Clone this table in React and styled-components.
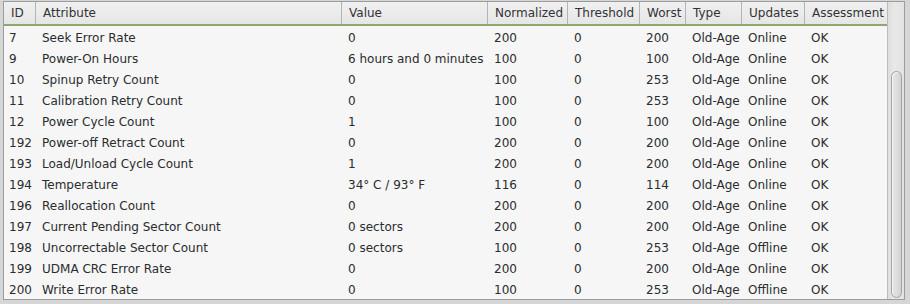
import React from "react";
import styled, { createGlobalStyle } from "styled-components";

const GlobalStyle = createGlobalStyle`
  html, body {
    margin: 0;
    padding: 0;
    background: #d6d6d6;
  }
  body {
    font-family: "DejaVu Sans", "Liberation Sans", sans-serif;
    font-size: 12px;
  }
`;

const COLUMNS = [
  { key: "id", title: "ID", width: 32 },
  { key: "name", title: "Attribute", width: 306 },
  { key: "value", title: "Value", width: 146 },
  { key: "norm", title: "Normalized", width: 80 },
  { key: "thr", title: "Threshold", width: 72 },
  { key: "worst", title: "Worst", width: 46 },
  { key: "type", title: "Type", width: 56 },
  { key: "upd", title: "Updates", width: 63 },
  { key: "ok", title: "Assessment", width: 82 },
];

const GRID = COLUMNS.map((c) => `${c.width}px`).join(" ");

const ROWS = [
  ["7", "Seek Error Rate", "0", "200", "0", "200", "Old-Age", "Online", "OK"],
  ["9", "Power-On Hours", "6 hours and 0 minutes", "100", "0", "100", "Old-Age", "Online", "OK"],
  ["10", "Spinup Retry Count", "0", "100", "0", "253", "Old-Age", "Online", "OK"],
  ["11", "Calibration Retry Count", "0", "100", "0", "253", "Old-Age", "Online", "OK"],
  ["12", "Power Cycle Count", "1", "100", "0", "100", "Old-Age", "Online", "OK"],
  ["192", "Power-off Retract Count", "0", "200", "0", "200", "Old-Age", "Online", "OK"],
  ["193", "Load/Unload Cycle Count", "1", "200", "0", "200", "Old-Age", "Online", "OK"],
  ["194", "Temperature", "34° C / 93° F", "116", "0", "114", "Old-Age", "Online", "OK"],
  ["196", "Reallocation Count", "0", "200", "0", "200", "Old-Age", "Online", "OK"],
  ["197", "Current Pending Sector Count", "0 sectors", "200", "0", "200", "Old-Age", "Online", "OK"],
  ["198", "Uncorrectable Sector Count", "0 sectors", "100", "0", "253", "Old-Age", "Offline", "OK"],
  ["199", "UDMA CRC Error Rate", "0", "200", "0", "200", "Old-Age", "Online", "OK"],
  ["200", "Write Error Rate", "0", "100", "0", "253", "Old-Age", "Offline", "OK"],
];

const Frame = styled.div`
  margin: 1px 0 0 3px;
  width: 902px;
  height: 299px;
  box-sizing: border-box;
  border: 1px solid #9c9c9c;
  background: #f6f6f6;
  display: flex;
  overflow: hidden;
`;

const TableArea = styled.div`
  width: 883px;
  display: flex;
  flex-direction: column;
`;

const HeaderRow = styled.div`
  display: grid;
  grid-template-columns: ${GRID};
  height: 22px;
  background: linear-gradient(#f0f0f0, #e6e6e6);
  border-bottom: 2px solid #8aa96f;
`;

const HeaderCell = styled.div`
  display: flex;
  align-items: center;
  padding-left: 7px;
  border-right: ${(p) => (p.$last ? "none" : "1px solid #b4b4b4")};
  color: #303335;
  white-space: nowrap;
  overflow: hidden;
`;

const Row = styled.div`
  display: grid;
  grid-template-columns: ${GRID};
  height: 21px;
`;

const Cell = styled.div`
  display: flex;
  align-items: center;
  padding: 2px 0 0 ${(p) => (p.$first ? 5 : 6)}px;
  color: #2a2c2e;
  white-space: nowrap;
  overflow: hidden;
`;

const ScrollTrack = styled.div`
  width: 17px;
  box-sizing: border-box;
  border-left: 1px solid #bcbcbc;
  background: linear-gradient(90deg, #dedede, #e8e8e8 40%, #e2e2e2);
  display: flex;
  flex-direction: column;
  padding: 0 2px 1px 3px;
`;

const Thumb = styled.div`
  margin-top: auto;
  height: 227px;
  box-sizing: border-box;
  border: 1px solid #a2a2a2;
  border-radius: 6px;
  background: linear-gradient(90deg, #e6e6e6, #dcdcdc 60%, #d2d2d2);
  box-shadow: inset 1px 1px 0 #f4f4f4;
`;

export default function App() {
  return (
    <>
      <GlobalStyle />
      <Frame>
        <TableArea>
          <HeaderRow>
            {COLUMNS.map((c, i) => (
              <HeaderCell key={c.key} $last={i === COLUMNS.length - 1}>
                {c.title}
              </HeaderCell>
            ))}
          </HeaderRow>
          {ROWS.map((r) => (
            <Row key={r[0]}>
              {r.map((v, i) => (
                <Cell key={i} $first={i === 0}>
                  {v}
                </Cell>
              ))}
            </Row>
          ))}
        </TableArea>
        <ScrollTrack>
          <Thumb />
        </ScrollTrack>
      </Frame>
    </>
  );
}
